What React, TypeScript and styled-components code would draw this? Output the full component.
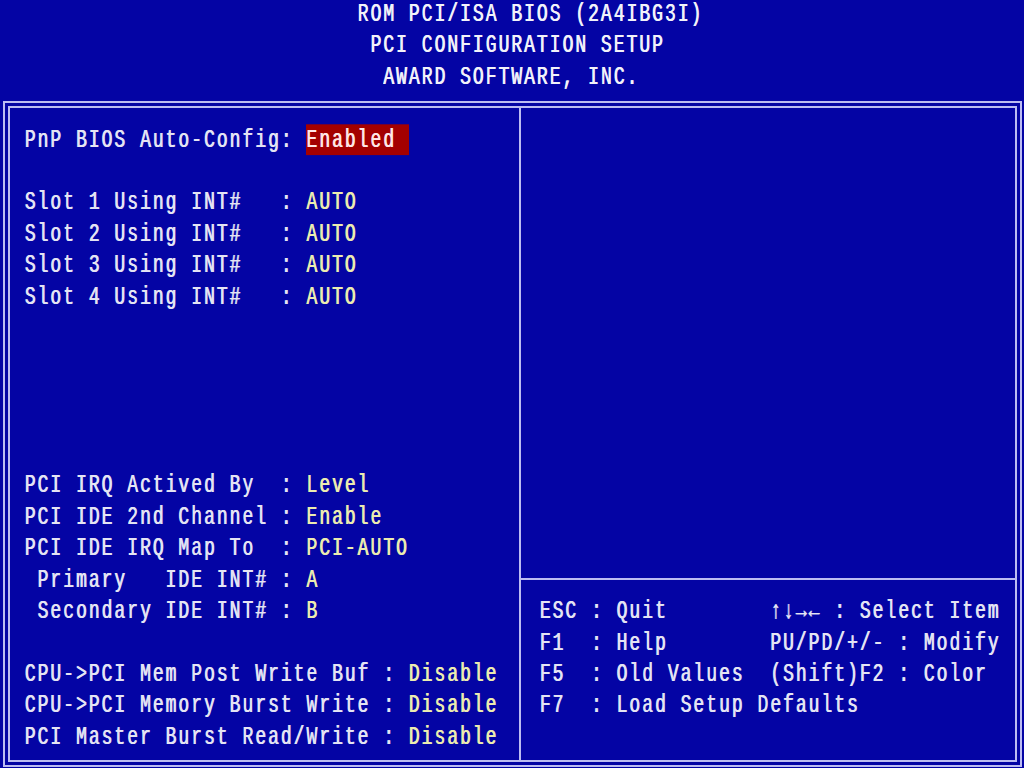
import React from 'react';
import styled, { createGlobalStyle } from 'styled-components';

// text-mode grid: 80 cells across, rows of ~31.4px
const ROW = 31.43;
const CELL = 12.8;
const STRETCH = 1.4;

const BLUE = '#0404a4';
const LINE = '#bcbcf2';

const GlobalStyle = createGlobalStyle`
  html, body {
    margin: 0;
    padding: 0;
    background: ${BLUE};
  }
  body {
    overflow: hidden;
  }
`;

type Setting = { label: string; value?: string; selected?: boolean } | null;

const settings: Setting[] = [
  { label: 'PnP BIOS Auto-Config: ', value: 'Enabled ', selected: true },
  null,
  { label: 'Slot 1 Using INT#   : ', value: 'AUTO' },
  { label: 'Slot 2 Using INT#   : ', value: 'AUTO' },
  { label: 'Slot 3 Using INT#   : ', value: 'AUTO' },
  { label: 'Slot 4 Using INT#   : ', value: 'AUTO' },
  null,
  null,
  null,
  null,
  null,
  { label: 'PCI IRQ Actived By  : ', value: 'Level' },
  { label: 'PCI IDE 2nd Channel : ', value: 'Enable' },
  { label: 'PCI IDE IRQ Map To  : ', value: 'PCI-AUTO' },
  { label: ' Primary   IDE INT# : ', value: 'A' },
  { label: ' Secondary IDE INT# : ', value: 'B' },
  null,
  { label: 'CPU->PCI Mem Post Write Buf : ', value: 'Disable' },
  { label: 'CPU->PCI Memory Burst Write : ', value: 'Disable' },
  { label: 'PCI Master Burst Read/Write : ', value: 'Disable' },
];

const keyHelp = [
  'ESC : Quit        \u2191\u2193\u2192\u2190 : Select Item',
  'F1  : Help        PU/PD/+/- : Modify',
  'F5  : Old Values  (Shift)F2 : Color',
  'F7  : Load Setup Defaults',
];

export default function App() {
  return (
    <Screen>
      <GlobalStyle />
      <Header>
        <Line $col={28}>ROM PCI/ISA BIOS (2A4IBG3I)</Line>
        <Line $col={29}>PCI CONFIGURATION SETUP</Line>
        <Line $col={30}>AWARD SOFTWARE, INC.</Line>
      </Header>
      <Frame>
        <Inner>
          <SettingsPanel>
            {settings.map((s, i) =>
              s ? (
                <Line key={i}>
                  {s.label}
                  <Value $selected={s.selected}>{s.value}</Value>
                </Line>
              ) : (
                <Line key={i} />
              )
            )}
          </SettingsPanel>
          <SidePanel>
            <HelpArea />
            <KeyArea>
              {keyHelp.map((k) => (
                <Line key={k}>{k}</Line>
              ))}
            </KeyArea>
          </SidePanel>
        </Inner>
      </Frame>
    </Screen>
  );
}

const Screen = styled.div`
  width: 1024px;
  height: 768px;
  overflow: hidden;
  background: ${BLUE};
  color: #e4e4f4;
  font-family: 'Liberation Mono', 'DejaVu Sans Mono', monospace;
  font-size: 18px;
  letter-spacing: ${CELL - 10.8}px;
`;

const Header = styled.header`
  margin-top: -1px;
  color: #f2f2fa;
`;

type LineProps = { $col?: number };
const Line = styled.div<LineProps>`
  height: ${ROW}px;
  line-height: ${ROW}px;
  white-space: pre;
  padding-left: ${(p) => (p.$col ?? 0) * CELL - 1}px;
  transform: scaleY(${STRETCH});
  text-shadow: 0.7px 0 0 currentColor;
`;

type ValueProps = { $selected?: boolean };
const Value = styled.span<ValueProps>`
  color: ${(p) => (p.$selected ? '#ffe6e6' : '#ececb0')};
  background: ${(p) => (p.$selected ? '#a40000' : 'transparent')};
  padding: 1px 0;
`;

const Frame = styled.div`
  box-sizing: border-box;
  width: 1019px;
  height: 666px;
  margin: 7.7px 0 0 3px;
  padding: 3px;
  border: 2px solid ${LINE};
`;

const Inner = styled.div`
  box-sizing: border-box;
  height: 100%;
  border: 2px solid ${LINE};
  display: grid;
  grid-template-columns: 511px 1fr;
`;

const SettingsPanel = styled.section`
  border-right: 2px solid ${LINE};
  padding: 16.7px 0 0 14.5px;
`;

const SidePanel = styled.section`
  display: flex;
  flex-direction: column;
`;

const HelpArea = styled.div`
  height: 470px;
`;

const KeyArea = styled.div`
  flex: 1;
  border-top: 2px solid ${LINE};
  padding: 16.2px 0 0 18.5px;
`;
